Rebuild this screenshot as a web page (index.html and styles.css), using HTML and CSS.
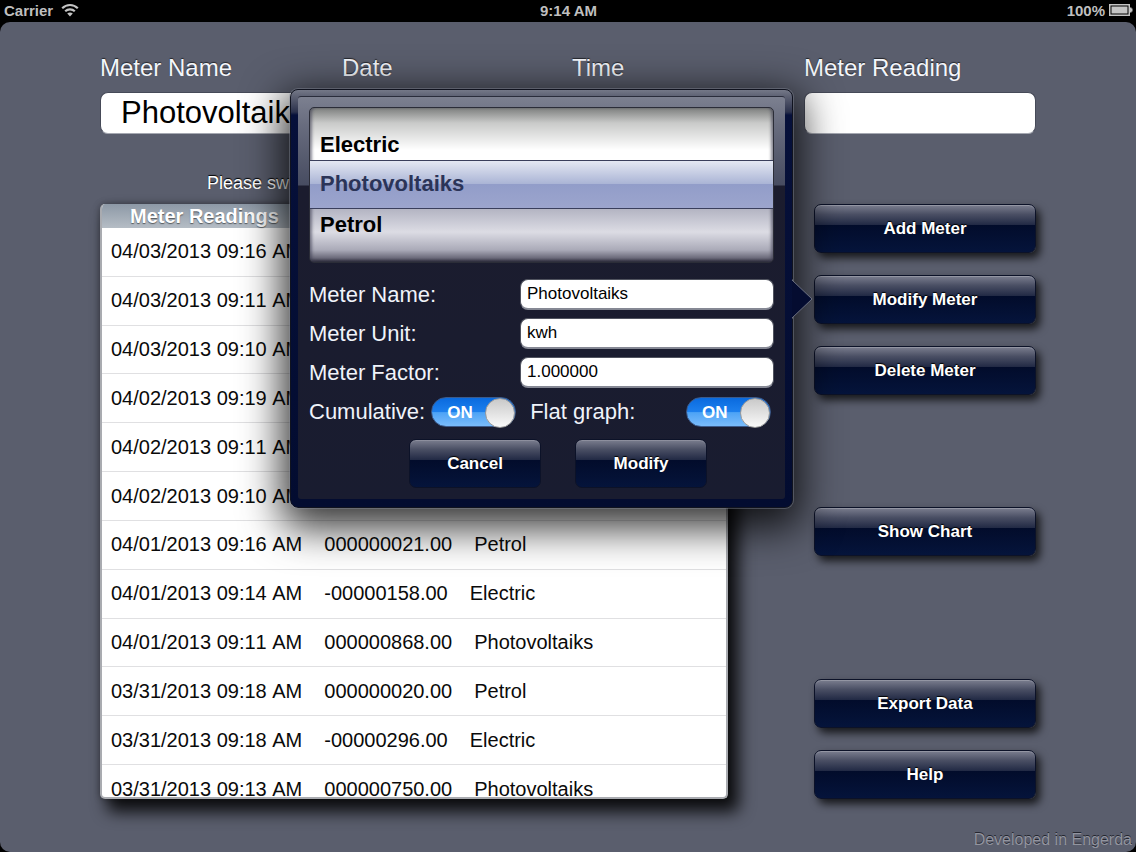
FILE: index.html
```html
<!DOCTYPE html>
<html lang="en">
<head>
<meta charset="utf-8">
<meta name="viewport" content="width=device-width, initial-scale=1">
<title>Meter Readings</title>
<link rel="stylesheet" href="styles.css">
</head>
<body>
<header class="status">
  <div class="status-left">
    <span>Carrier</span>
    <svg class="wifi" viewBox="0 0 18 14" aria-hidden="true">
      <path d="M1.2 5.2C5.6.9 12.4.9 16.8 5.2" />
      <path d="M4.2 8.3c2.700-2.600 6.900-2.600 9.600 0" />
      <path class="wifi-dot" d="M6.200 10.600c1.700-1.500 3.900-1.500 5.600 0L9 13.400z" />
    </svg>
  </div>
  <span class="clock">9:14 AM</span>
  <div class="status-right">
    <span>100%</span>
    <svg class="battery" viewBox="0 0 24 12" aria-hidden="true">
      <rect class="battery-case" x="0.750" y="0.750" width="19.500" height="10.500" />
      <rect class="battery-fill" x="2.500" y="2.500" width="16" height="7" />
      <path class="battery-fill" d="M21 3.500h1.500v1h1v3h-1v1H21z" />
    </svg>
  </div>
</header>

<main class="screen">
  <section class="readings">
    <div class="entry">
      <label class="title" for="meter">Meter Name</label>
      <span class="title">Date</span>
      <span class="title">Time</span>
      <input class="field field-name" id="meter" type="text" value="Photovoltaiks">
    </div>
    <p class="hint">Please swipe</p>
    <div class="list">
      <table class="table">
        <thead><tr><th scope="col">Meter Readings</th></tr></thead>
        <tbody>
          <tr><td>04/03/2013 09:16 AM</td></tr>
          <tr><td>04/03/2013 09:11 AM</td></tr>
          <tr><td>04/03/2013 09:10 AM</td></tr>
          <tr><td>04/02/2013 09:19 AM</td></tr>
          <tr><td>04/02/2013 09:11 AM</td></tr>
          <tr><td>04/02/2013 09:10 AM</td></tr>
          <tr><td>04/01/2013 09:16 AM</td><td>000000021.00</td><td>Petrol</td></tr>
          <tr><td>04/01/2013 09:14 AM</td><td>-00000158.00</td><td>Electric</td></tr>
          <tr><td>04/01/2013 09:11 AM</td><td>000000868.00</td><td>Photovoltaiks</td></tr>
          <tr><td>03/31/2013 09:18 AM</td><td>000000020.00</td><td>Petrol</td></tr>
          <tr><td>03/31/2013 09:18 AM</td><td>-00000296.00</td><td>Electric</td></tr>
          <tr><td>03/31/2013 09:13 AM</td><td>000000750.00</td><td>Photovoltaiks</td></tr>
        </tbody>
      </table>
    </div>
  </section>

  <aside class="side">
    <label class="title" for="reading">Meter Reading</label>
    <input class="field" id="reading" type="text">
    <nav class="actions">
      <button class="btn" type="button">Add Meter</button>
      <div class="anchor">
        <button class="btn" type="button">Modify Meter</button>
        <form class="popover">
          <svg class="arrow" viewBox="0 0 22 42" aria-hidden="true"><path d="M0 1v1L20 21 0 40v1" /></svg>
          <div class="panel">
            <ul class="picker" role="listbox" aria-label="Meter">
              <li role="option">Electric</li>
              <li role="option" aria-selected="true" class="picked">Photovoltaiks</li>
              <li role="option">Petrol</li>
            </ul>
            <div class="rows">
              <div class="row"><label for="p-name">Meter Name:</label><input class="small-field" id="p-name" type="text" value="Photovoltaiks"></div>
              <div class="row"><label for="p-unit">Meter Unit:</label><input class="small-field" id="p-unit" type="text" value="kwh"></div>
              <div class="row"><label for="p-factor">Meter Factor:</label><input class="small-field" id="p-factor" type="text" value="1.000000"></div>
              <div class="row row-switches">
                <label for="cumulative">Cumulative:</label>
                <span class="switch"><input id="cumulative" type="checkbox" role="switch" checked><span class="switch-text">ON</span></span>
                <label class="flat" for="flat">Flat graph:</label>
                <span class="switch"><input id="flat" type="checkbox" role="switch" checked><span class="switch-text">ON</span></span>
              </div>
            </div>
            <div class="popover-actions">
              <button class="btn btn-small" type="button">Cancel</button>
              <button class="btn btn-small" type="button">Modify</button>
            </div>
          </div>
        </form>
      </div>
      <button class="btn" type="button">Delete Meter</button>
      <button class="btn btn-chart" type="button">Show Chart</button>
      <button class="btn btn-export" type="button">Export Data</button>
      <button class="btn" type="button">Help</button>
    </nav>
  </aside>
  <footer class="credit">Developed in Engerda</footer>
</main>
</body>
</html>
```
FILE: styles.css
```css
* { box-sizing: border-box; }

body {
  margin: 0;
  height: 100vh;
  display: flex;
  flex-direction: column;
  overflow: hidden;
  background: #000;
  font-family: "Liberation Sans", Arial, Helvetica, sans-serif;
}

button, input { font-family: inherit; }

/* Status bar */
.status {
  display: grid;
  grid-template-columns: 1fr auto 1fr;
  align-items: center;
  height: 22px;
  padding: 0 3px 2px 4px;
  color: #bfbfbf;
  font-size: 15px;
  font-weight: bold;
}
.status-left, .status-right { display: flex; align-items: center; }
.status-left { gap: 8px; }
.status-right { gap: 4px; justify-content: flex-end; }
.wifi { width: 18px; height: 14px; fill: none; stroke: #c4c4c4; stroke-width: 2.2; }
.wifi .wifi-dot { fill: #c4c4c4; stroke: none; }
.battery { width: 24px; height: 12px; }
.battery-case { fill: none; stroke: #c4c4c4; stroke-width: 1.500; }
.battery-fill { fill: #c4c4c4; }

/* Screen */
.screen {
  flex: 1;
  min-height: 0;
  display: grid;
  grid-template-columns: minmax(0, 1fr) 232px;
  grid-template-rows: minmax(0, 1fr) auto;
  column-gap: 76px;
  padding: 31px 100px 0;
  border-radius: 10px;
  background: #5a5e6d;
}
.title {
  color: #f4f6fb;
  font-size: 24px;
  line-height: 30px;
  text-shadow: 0 -1px 1px rgba(0, 0, 0, .6);
}
.field {
  width: 100%;
  height: 42px;
  padding: 0 20px;
  border: 1px solid #464a58;
  border-bottom-color: #a5a8b1;
  border-radius: 8px;
  background: #fff;
  color: #000;
  font-size: 31px;
}
.readings { display: flex; flex-direction: column; min-height: 0; }
.entry {
  display: grid;
  grid-template-columns: 242px 230px 1fr;
  row-gap: 9px;
}
.field-name { width: 232px; }
.hint {
  margin: 38px 0 10px;
  padding-left: 107px;
  color: #fff;
  font-size: 18px;
  line-height: 22px;
  text-shadow: 0 -1px 1px #000;
}
.list {
  flex: 1;
  min-height: 0;
  overflow: hidden;
  border: 2px solid #a9abb0;
  border-top: 0;
  border-radius: 5px;
  background: #fff;
  box-shadow: 9px 11px 16px 2px rgba(0, 0, 0, .85), 0 0 6px rgba(0, 0, 0, .35);
}
.table, .table thead, .table tbody { display: flex; flex-direction: column; }
.table th {
  flex: 1;
  height: 24px;
  padding: 0 28px;
  background: linear-gradient(#8d99a6, #b5bdc5);
  color: #fff;
  font-size: 20px;
  line-height: 24px;
  text-align: left;
  text-shadow: 0 1px 1px rgba(0, 0, 0, .5);
}
.table tr { display: flex; align-items: center; gap: 22px; }
.table tbody { height: 586px; font-kerning: none; }
.table tbody tr {
  flex: 1;
  padding: 0 9px;
  border-bottom: 1px solid #e0e0e2;
}
.table td { padding: 0; color: #0a0a0a; font-size: 20px; }

/* Buttons column */
.side { display: flex; flex-direction: column; }
.side > .title { margin-bottom: 9px; }
.actions {
  flex: 1;
  display: flex;
  flex-direction: column;
  gap: 22px;
  padding: 70px 0 0 10px;
}
.btn {
  flex: none;
  width: 100%;
  height: 49px;
  padding: 0;
  border: 1px solid #0c1228;
  border-radius: 7px;
  background: linear-gradient(#7b7e8f, #4a4f64 20%, #222a45 42%, #020c2b 43%, #05143b);
  box-shadow: 4px 5px 8px rgba(0, 0, 0, .75), inset 0 1px 0 rgba(255, 255, 255, .2);
  color: #fff;
  font-size: 17px;
  font-weight: bold;
  text-shadow: 0 -1px 1px #000;
}
.btn-chart { margin-top: 90px; }
.btn-export { margin-top: auto; }
.anchor { position: relative; height: 49px; }

/* Popover, attached to the left of its button */
.popover {
  position: absolute;
  z-index: 2;
  top: -186px;
  right: calc(100% + 21px);
  width: 503px;
  padding: 6px 7px 8px;
  border: 1px solid #10131f;
  border-radius: 8px;
  background: linear-gradient(#747888, #5c6072 7px, #2b314c 22px, #06103a 25px, #030c30);
  box-shadow: 0 0 0 1px rgba(140, 145, 160, .4), 0 12px 40px 8px rgba(0, 0, 0, .8);
}
.arrow {
  position: absolute;
  top: 188px;
  left: 100%;
  width: 22px;
  height: 42px;
  fill: #040c30;
  stroke: #6c7080;
}
.panel {
  padding: 10px 11px 11px;
  border-top: 1px solid #2a2d3c;
  border-radius: 3px;
  background: linear-gradient(#7c8090, #676b7d 30px, #474c61 88px, #1b1c2e 89px, #191c30);
}
.picker {
  display: flex;
  flex-direction: column;
  justify-content: center;
  height: 156px;
  margin: 0;
  padding: 0;
  list-style: none;
  border: 1px solid #2b2d38;
  border-radius: 5px;
  background: linear-gradient(#7d7f7e, #c9cac9 15px, #fff 42px, #fff 54px, #b5b6c4 102px, #dcdce4 124px, #aaaab8 142px, #6b6a7a 150px, #292838);
  box-shadow: inset 3px 0 3px -1px rgba(60, 60, 80, .6), inset -3px 0 3px -1px rgba(60, 60, 80, .6);
  font-size: 22px;
  font-weight: bold;
}
.picker li { height: 40px; padding: 0 10px; line-height: 40px; color: #000; }
.picker .picked {
  height: 49px;
  margin: -5px 0 -4px;
  border: 1px solid #3a3f5c;
  border-width: 1px 0;
  line-height: 46px;
  background: linear-gradient(#e4e8f3, #aab4d5 49%, #929dc9 50%, #9ca5cd);
  color: #2b3458;
}
.rows { display: flex; flex-direction: column; gap: 8px; margin-top: 16px; }
.row {
  display: flex;
  align-items: center;
  justify-content: space-between;
  height: 31px;
  color: #f0f3fa;
  font-size: 22px;
}
.small-field {
  width: 254px;
  height: 31px;
  padding: 0 6px;
  border: 1px solid #50535f;
  border-bottom: 2px solid #858894;
  border-radius: 8px;
  background: #fff;
  color: #000;
  font-size: 17px;
}
.row-switches { justify-content: flex-start; padding-right: 3px; }
.row-switches .switch { margin-left: 6px; }
.flat { margin-left: 14px; }
.row-switches .flat + .switch { margin-left: auto; }
.switch { position: relative; width: 85px; height: 30px; }
.switch input {
  appearance: none;
  display: flex;
  justify-content: flex-end;
  width: 85px;
  height: 30px;
  margin: 0;
  border: 1px solid #3c5b8c;
  border-radius: 15px;
  background: linear-gradient(#0a6ade, #1d80ee 50%, #4da3f6 52%, #7abcfb);
}
.switch input::after {
  content: "";
  width: 28px;
  height: 28px;
  border: 1px solid #9a9a9a;
  border-radius: 50%;
  background: linear-gradient(#c9c9c9, #fafafa);
}
.switch-text {
  position: absolute;
  top: 0;
  left: 16px;
  color: #fff;
  font-size: 17px;
  font-weight: bold;
  line-height: 31px;
  pointer-events: none;
}
.popover-actions { display: flex; gap: 34px; margin-top: 12px; padding-left: 100px; }
.btn-small { width: 132px; box-shadow: inset 0 1px 0 rgba(255, 255, 255, .15); }

.credit {
  grid-column: 1 / -1;
  margin: 31px -96px 2px;
  color: #92949f;
  font-size: 16px;
  line-height: 20px;
  text-align: right;
  text-shadow: 0 -1px 0 #23252f;
}
```
